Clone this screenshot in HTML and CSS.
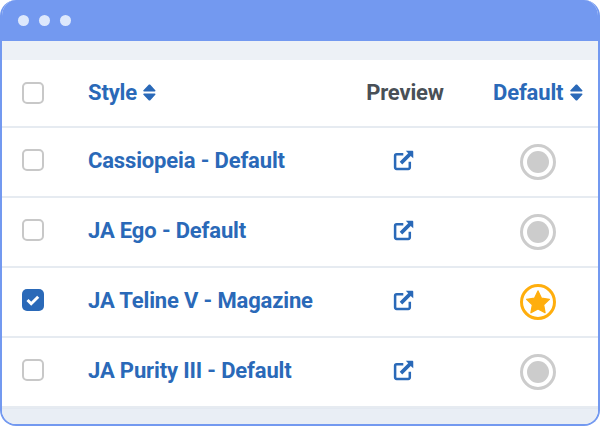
FILE: index.html
```html
<!DOCTYPE html>
<html lang="en">

<head>
    <meta charset="UTF-8">
    <title>Template Styles</title>
    <link rel="stylesheet" href="styles.css">
</head>

<body>
    <svg class="icon-defs" xmlns="http://www.w3.org/2000/svg" width="0" height="0">
        <symbol id="sort" viewBox="0 0 14 18">
            <path d="M7 .3c.4 0 .7.2.9.4l5.300 5.800c.6.7.2 1.500-.7 1.500H1.500C.6 8-.2 7.200.5 6.500L6.100.7c.2-.2.5-.4.9-.4z" />
            <path d="M7 17.700c.4 0 .7-.2.9-.4l5.300-5.800c.6-.7.2-1.500-.7-1.500H1.500c-.9 0-1.700.8-1 1.500l5.600 5.800c.2.2.5.4.9.4z" />
        </symbol>
        <symbol id="external" viewBox="0 0 20 20">
            <path d="M16 11.200v5.300a1.500 1.500 0 0 1-1.500 1.500h-11A1.500 1.500 0 0 1 2 16.500v-11A1.500 1.500 0 0 1 3.500 4h6.300" fill="none" stroke="currentColor" stroke-width="2.400" />
            <path d="M12.200 .8h6.300a.8.8 0 0 1 .8.8v6.300l-2.400-2.300-8.100 8.100-2.400-2.400 8.100-8.100z" />
        </symbol>
    </svg>

    <div class="window">
        <div class="titlebar">
            <span class="dot"></span>
            <span class="dot"></span>
            <span class="dot"></span>
        </div>
        <div class="band"></div>

        <div class="row row--head">
            <div class="cell-check"><span class="checkbox"></span></div>
            <div class="cell-title">Style <svg class="sort"><use href="#sort" /></svg></div>
            <div class="cell-preview">Preview</div>
            <div class="cell-default cell-default--head">Default <svg class="sort"><use href="#sort" /></svg></div>
        </div>

        <div class="row">
            <div class="cell-check"><span class="checkbox"></span></div>
            <div class="cell-title">Cassiopeia - Default</div>
            <div class="cell-preview"><svg class="external"><use href="#external" /></svg></div>
            <div class="cell-default"><span class="radio"></span></div>
        </div>

        <div class="row">
            <div class="cell-check"><span class="checkbox"></span></div>
            <div class="cell-title">JA Ego - Default</div>
            <div class="cell-preview"><svg class="external"><use href="#external" /></svg></div>
            <div class="cell-default"><span class="radio"></span></div>
        </div>

        <div class="row">
            <div class="cell-check">
                <span class="checkbox checkbox--on">
                    <svg viewBox="0 0 22 22" width="22" height="22">
                        <path d="M5.500 11l3.700 3.700 7-7" fill="none" stroke="#fff" stroke-width="3" />
                    </svg>
                </span>
            </div>
            <div class="cell-title">JA Teline V - Magazine</div>
            <div class="cell-preview"><svg class="external"><use href="#external" /></svg></div>
            <div class="cell-default">
                <span class="radio radio--star">
                    <svg viewBox="0 0 24 24" width="26" height="26">
                        <path d="M12 1.800l3.200 6.700 7.300 1-5.300 5.100 1.300 7.300-6.500-3.500-6.500 3.500 1.300-7.300-5.300-5.100 7.300-1z" fill="#ffae0d" stroke="#ffae0d" stroke-width="1.200" stroke-linejoin="round" />
                    </svg>
                </span>
            </div>
        </div>

        <div class="row">
            <div class="cell-check"><span class="checkbox"></span></div>
            <div class="cell-title">JA Purity III - Default</div>
            <div class="cell-preview"><svg class="external"><use href="#external" /></svg></div>
            <div class="cell-default"><span class="radio"></span></div>
        </div>

        <div class="band band--bottom"></div>
    </div>
</body>

</html>
```

FILE: styles.css
```css
html,
body {
    margin: 0;
    padding: 0;
    width: 600px;
    height: 426px;
    overflow: hidden;
    background: #ffffff;
}

body {
    font-family: Roboto, sans-serif;
}

.icon-defs {
    display: block;
    height: 0;
}

.window {
    box-sizing: border-box;
    width: 600px;
    height: 426px;
    background: #ffffff;
    border: 2px solid #7399f0;
    border-top: 0;
    border-radius: 16px;
    overflow: hidden;
    display: flex;
    flex-direction: column;
}

.titlebar {
    height: 41px;
    flex: none;
    margin: 0 -2px;
    padding-left: 18px;
    background: #7399f0;
    display: flex;
    align-items: center;
    gap: 10px;
}

.dot {
    width: 11px;
    height: 11px;
    border-radius: 50%;
    background: #dde8fc;
}

.band {
    height: 19px;
    flex: none;
    background: #edf1f6;
}

.band--bottom {
    flex: 1;
    height: auto;
    background: #e9eef5;
    border-top: 1px solid #e3e9f1;
}

.row {
    height: 70px;
    flex: none;
    box-sizing: border-box;
    padding-bottom: 4px;
    display: flex;
    align-items: center;
    border-bottom: 2px solid #e6ebf1;
    font-size: 22px;
    letter-spacing: -0.15px;
    font-weight: 700;
    color: #2a69b8;
}

.row:last-of-type {
    height: 68px;
    border-bottom: 0;
}

.row--head {
    height: 68px;
    padding-bottom: 2px;
}

.row--head .checkbox {
    margin-top: 2px;
}

.cell-check {
    width: 86px;
    flex: none;
    padding-left: 20px;
    box-sizing: border-box;
    display: flex;
}

.cell-title {
    width: 262px;
    flex: none;
    display: flex;
    align-items: center;
    gap: 6px;
}

.cell-preview {
    width: 110px;
    flex: none;
    display: flex;
    justify-content: center;
    color: #495057;
}

.cell-default {
    flex: 1;
    display: flex;
    align-items: center;
    justify-content: center;
    padding-left: 18px;
}

.cell-default--head {
    justify-content: flex-start;
    gap: 7px;
    padding-left: 33px;
}

.checkbox {
    box-sizing: border-box;
    width: 22px;
    height: 22px;
    border: 2px solid #c8c8c8;
    border-radius: 5px;
    background: #ffffff;
    display: block;
}

.checkbox--on {
    border: 0;
    background: #2a69b8;
}

.checkbox--on svg {
    display: block;
}

.sort {
    width: 13px;
    height: 17px;
    fill: #2a69b8;
}

.external {
    width: 21px;
    height: 21px;
    margin-left: -4px;
    fill: #2a69b8;
    color: #2a69b8;
}

.radio {
    box-sizing: border-box;
    width: 36px;
    height: 36px;
    margin-top: 4px;
    border: 3px solid #cccccc;
    border-radius: 50%;
    display: flex;
    align-items: center;
    justify-content: center;
}

.radio::before {
    content: "";
    width: 22px;
    height: 22px;
    border-radius: 50%;
    background: #cccccc;
}

.radio--star {
    border-color: #ffae0d;
}

.radio--star::before {
    display: none;
}
```
